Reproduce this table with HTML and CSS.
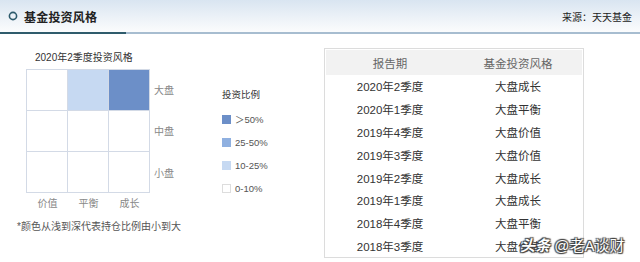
FILE: index.html
```html
<!DOCTYPE html>
<html lang="zh">
<head>
<meta charset="utf-8">
<link rel="stylesheet" href="styles.css">
</head>
<body>
<div class="page">
  <div class="head">
    <div class="head-left">
      <svg class="ring" width="10" height="10" viewBox="0 0 10 10"><circle cx="5" cy="5" r="3.6" fill="none" stroke="#2c5a6c" stroke-width="1.6"/></svg>
      <span class="title">基金投资风格</span>
    </div>
    <span class="source">来源：天天基金</span>
  </div>
  <div class="rule"><span class="rule-dark"></span><span class="rule-light"></span></div>

  <div class="content">
    <div class="box-panel">
      <div class="box-title">2020年2季度投资风格</div>
      <div class="box-row">
        <div class="grid">
          <div class="cell"></div><div class="cell c-light"></div><div class="cell c-dark"></div>
          <div class="cell"></div><div class="cell"></div><div class="cell"></div>
          <div class="cell"></div><div class="cell"></div><div class="cell"></div>
        </div>
        <div class="row-labels">
          <span>大盘</span><span>中盘</span><span>小盘</span>
        </div>
      </div>
      <div class="col-labels"><span>价值</span><span>平衡</span><span>成长</span></div>
      <div class="note">*颜色从浅到深代表持仓比例由小到大</div>
    </div>

    <div class="legend">
      <div class="legend-title">投资比例</div>
      <div class="legend-item"><span class="sw sw1"></span>＞50%</div>
      <div class="legend-item"><span class="sw sw2"></span>25-50%</div>
      <div class="legend-item"><span class="sw sw3"></span>10-25%</div>
      <div class="legend-item"><span class="sw sw4"></span>0-10%</div>
    </div>

    <div class="table">
      <div class="tr th"><span>报告期</span><span>基金投资风格</span></div>
      <div class="tr"><span>2020年2季度</span><span>大盘成长</span></div>
      <div class="tr"><span>2020年1季度</span><span>大盘平衡</span></div>
      <div class="tr"><span>2019年4季度</span><span>大盘价值</span></div>
      <div class="tr"><span>2019年3季度</span><span>大盘价值</span></div>
      <div class="tr"><span>2019年2季度</span><span>大盘成长</span></div>
      <div class="tr"><span>2019年1季度</span><span>大盘成长</span></div>
      <div class="tr"><span>2018年4季度</span><span>大盘平衡</span></div>
      <div class="tr"><span>2018年3季度</span><span>大盘价值</span></div>
    </div>
  </div>

  <div class="watermark"><span class="wm-logo">头条</span> @老A谈财</div>
</div>
</body>
</html>
```

FILE: styles.css
```css
* { box-sizing: border-box; }
html, body { margin: 0; padding: 0; background: #fff; }
body {
  width: 640px;
  height: 262px;
  overflow: hidden;
  font-family: "Liberation Sans", "Noto Sans CJK SC", sans-serif;
  color: #333;
}
.page { position: relative; width: 640px; height: 262px; }

.head {
  height: 32px;
  display: flex;
  align-items: center;
  justify-content: space-between;
  padding: 0 8px 0 8px;
  background: linear-gradient(to bottom, #d9e5f1 0%, #eef3f8 60%, #fbfcfd 100%);
}
.head-left { display: flex; align-items: center; gap: 6px; }
.ring { display: block; }
.title { font-size: 12px; font-weight: bold; color: #222; letter-spacing: 0.2px; }
.source { font-size: 10px; color: #222; }

.rule { display: flex; height: 2px; }
.rule-dark { width: 126px; background: #2f5c6c; }
.rule-light { flex: 1; background: #a7bdd0; }

.content { display: flex; align-items: flex-start; }

.box-panel { padding: 17px 0 0 17px; width: 222px; }
.box-title { font-size: 10px; color: #333; padding-left: 18px; line-height: 13px; }
.box-row { display: flex; align-items: stretch; margin-top: 5px; padding-left: 9px; }
.grid {
  display: grid;
  grid-template-columns: repeat(3, 41px);
  grid-template-rows: repeat(3, 41px);
  border-left: 1px solid #d3dae6;
  border-top: 1px solid #d3dae6;
}
.cell { border-right: 1px solid #d3dae6; border-bottom: 1px solid #d3dae6; background: #fff; }
.c-light { background: #c6d9f2; }
.c-dark { background: #6c8fc8; }
.row-labels {
  display: flex;
  flex-direction: column;
  justify-content: space-around;
  padding-left: 4px;
  font-size: 10px;
  color: #888;
}
.col-labels {
  display: grid;
  grid-template-columns: repeat(3, 41px);
  margin-left: 10px;
  margin-top: 4px;
  font-size: 10px;
  color: #888;
  text-align: center;
  line-height: 14px;
}
.note { font-size: 10px; color: #555; margin-top: 9px; line-height: 14px; }

.legend { padding: 54px 0 0 0; width: 102px; }
.legend-title { font-size: 9.5px; color: #333; line-height: 14px; margin-bottom: 6px; }
.legend-item {
  display: flex;
  align-items: center;
  font-size: 9.5px;
  color: #555;
  height: 23px;
  line-height: 23px;
}
.sw { width: 9px; height: 9px; margin-right: 4px; display: inline-block; }
.sw1 { background: #6c8fc8; }
.sw2 { background: #8fb0e0; }
.sw3 { background: #c6d9f2; }
.sw4 { background: #fff; border: 1px solid #ddd; }

.table {
  margin-top: 14px;
  width: 260px;
  border: 1px solid #dcdcdc;
  padding: 1px 1px 0 1px;
  height: 210px;
}
.tr {
  display: grid;
  grid-template-columns: 1fr 1fr;
  height: 22.8px;
  align-items: center;
  text-align: center;
  font-size: 11.5px;
  color: #333;
}
.th { height: 25px; background: #f2f2f2; color: #666; }

.watermark {
  position: absolute;
  left: 520px;
  top: 236px;
  font-size: 15px;
  color: #fff;
  line-height: 20px;
  white-space: nowrap;
  text-shadow: 0 0 1px #333, 1px 1px 1px #444, -1px -1px 1px #444, 1px -1px 1px #444, -1px 1px 1px #444;
}
.wm-logo { font-weight: bold; font-style: italic; }
```
